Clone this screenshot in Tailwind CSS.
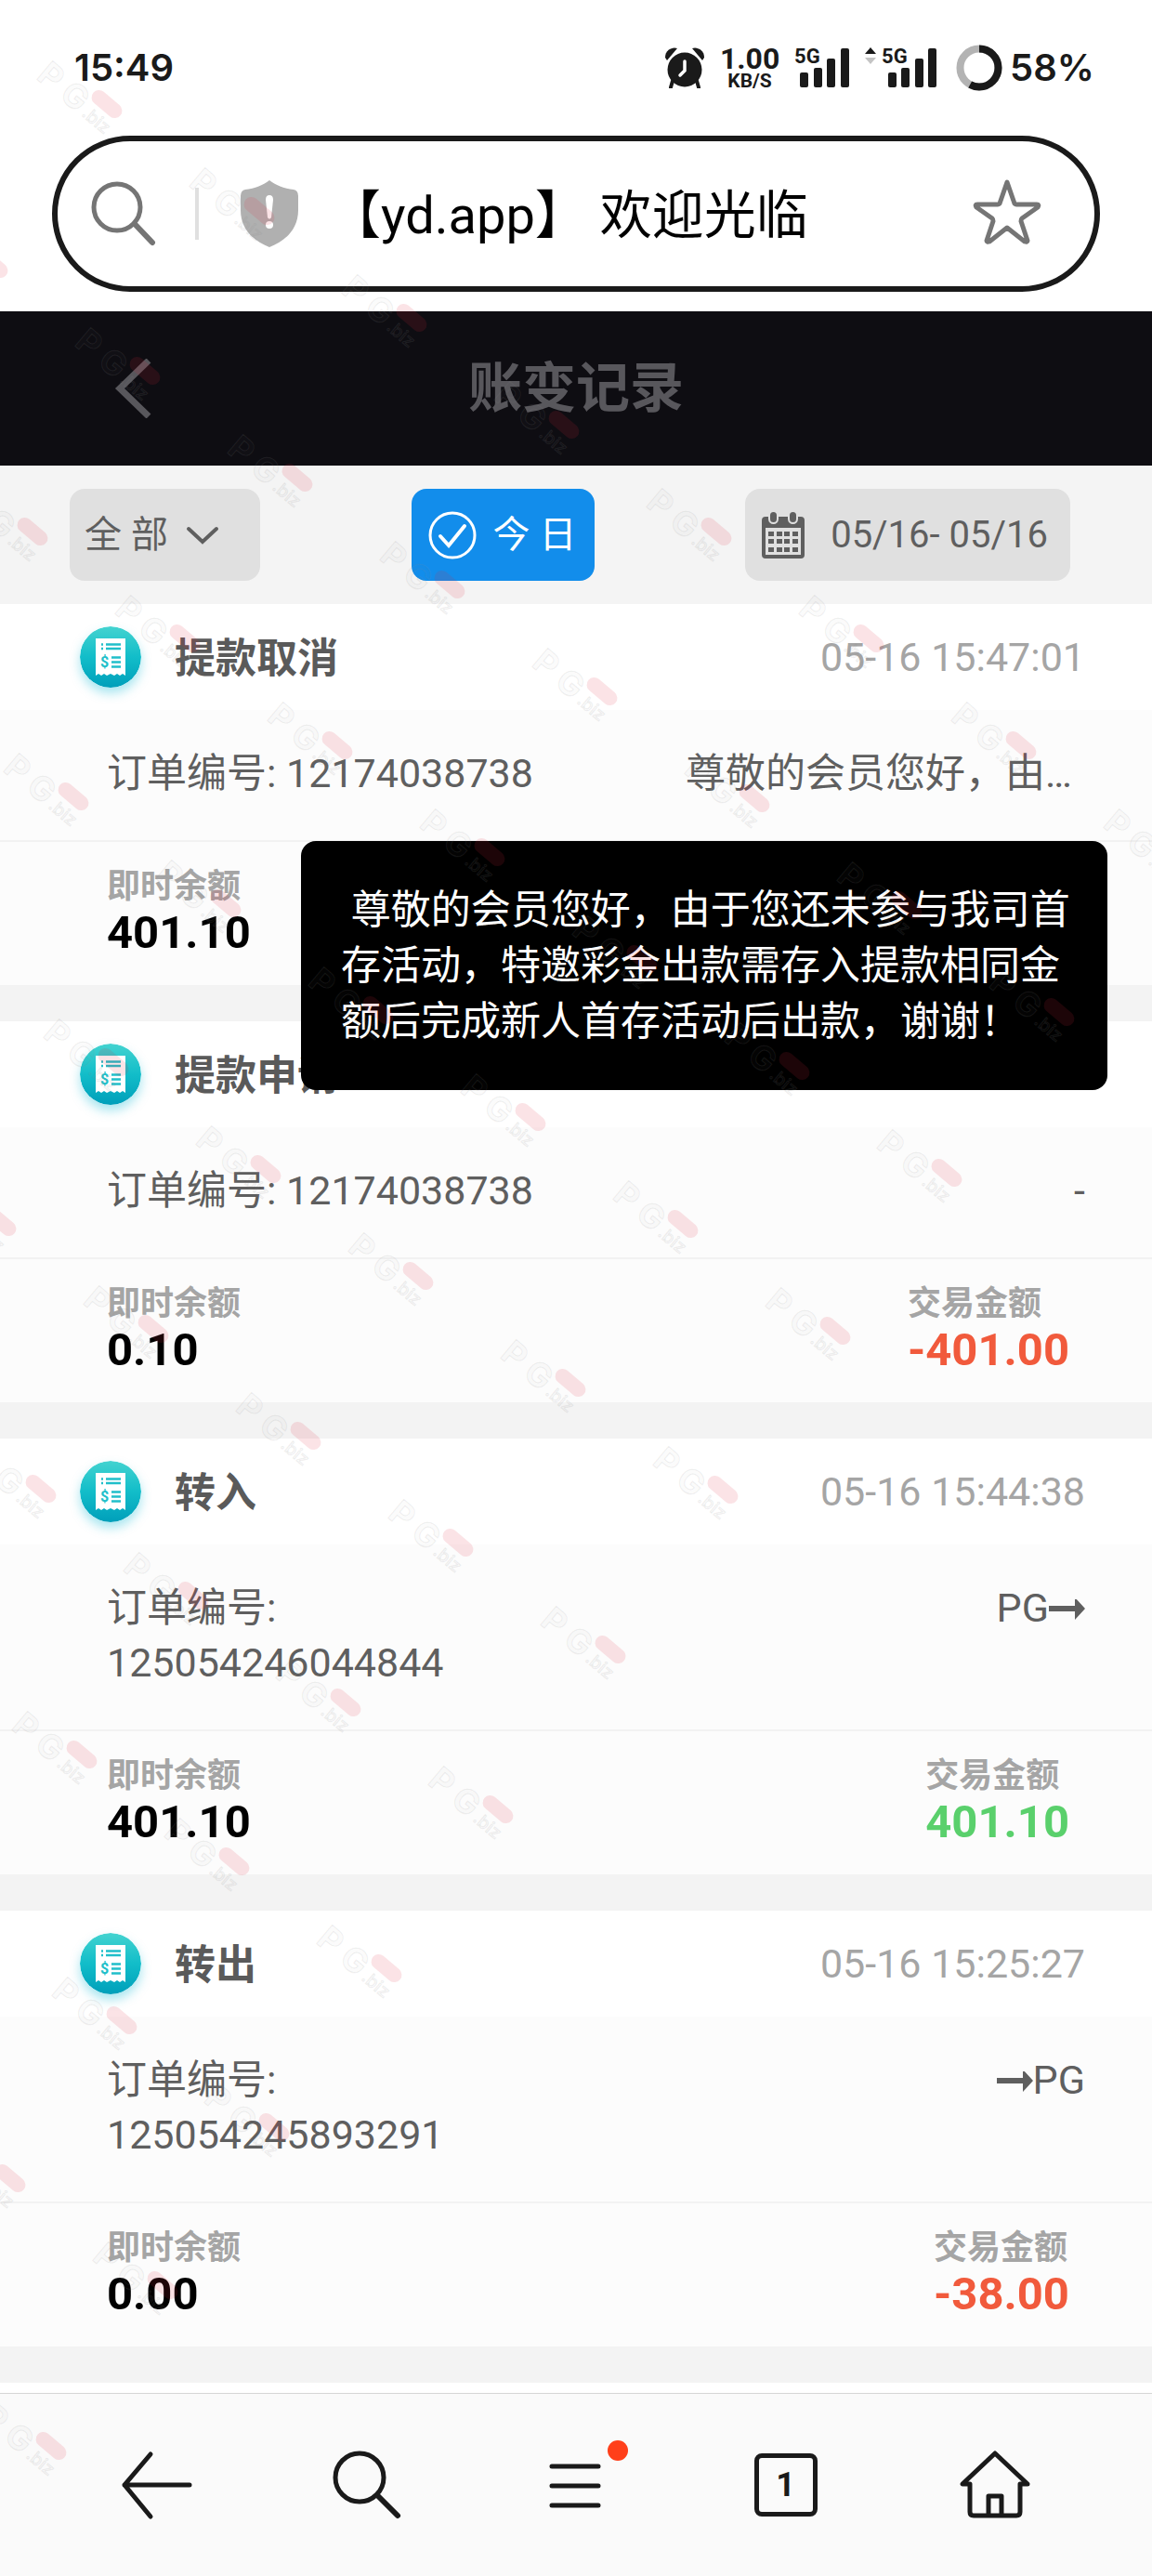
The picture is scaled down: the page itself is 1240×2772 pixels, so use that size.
<!DOCTYPE html>
<html lang="zh-CN">
<head>
  <meta charset="UTF-8" />
  <meta name="viewport" content="width=device-width, initial-scale=1.0" />
  <title>账变记录</title>
  <script src="https://cdn.jsdelivr.net/npm/@tailwindcss/browser@4"></script>
</head>
<body class="bg-white font-['Roboto','Noto_Sans_CJK_SC',sans-serif]">
<div class="relative flex min-h-screen flex-col overflow-hidden">

  <!-- Status bar -->
  <div class="flex h-[146px] items-center justify-between pl-20 pr-[62px] font-['Inter',sans-serif] font-semibold text-[#1a1a1a]">
    <span class="text-[40px]">15:49</span>
    <div class="flex items-center">
      <svg class="h-11 w-11" viewBox="0 0 44 44" fill="#1a1a1a">
        <circle cx="22" cy="24" r="18.500" />
        <path d="M1 11 A10 10 0 0 1 14 1 L3 14 Z" />
        <path d="M43 11 A10 10 0 0 0 30 1 L41 14 Z" />
        <path d="M9 36 L7 43 M35 36 L37 43" stroke="#1a1a1a" stroke-width="4" stroke-linecap="round" />
        <path d="M22 15 V25 L17 30" fill="none" stroke="#fff" stroke-width="3.500" stroke-linecap="round" />
      </svg>
      <div class="ml-4 flex w-16 flex-col items-center font-['Roboto',sans-serif] font-bold">
        <span class="text-[32px] leading-7">1.00</span>
        <span class="text-[21px] leading-5">KB/S</span>
      </div>
      <div class="relative ml-4">
        <svg class="h-11 w-[60px]" viewBox="0 0 60 44" fill="#1a1a1a">
          <rect x="6" y="27" width="9" height="16" rx="2" />
          <rect x="21" y="22" width="9" height="21" rx="2" />
          <rect x="35" y="12" width="9" height="31" rx="2" />
          <rect x="50" y="1" width="9" height="42" rx="2" />
        </svg>
        <span class="absolute -top-1 left-0 font-['Roboto',sans-serif] text-[22px] font-bold leading-7">5G</span>
      </div>
      <div class="relative ml-4">
        <svg class="h-11 w-[78px]" viewBox="0 0 78 44" fill="#1a1a1a">
          <path d="M0 7 L6 0 L12 7 Z" />
          <path d="M0 11 L6 18 L12 11 Z" fill="#c4c4c4" />
          <rect x="25" y="27" width="9" height="16" rx="2" />
          <rect x="39" y="22" width="9" height="21" rx="2" />
          <rect x="54" y="12" width="9" height="31" rx="2" />
          <rect x="68" y="1" width="9" height="42" rx="2" />
        </svg>
        <span class="absolute -top-1 left-[18px] font-['Roboto',sans-serif] text-[22px] font-bold leading-7">5G</span>
      </div>
      <svg class="ml-5 h-[50px] w-[50px]" viewBox="0 0 50 50" fill="none" stroke-width="8">
        <circle cx="25" cy="25" r="20.500" stroke="#b3b3b3" />
        <circle cx="25" cy="25" r="20.500" stroke="#1a1a1a" pathLength="100" stroke-dasharray="58 42" transform="rotate(-90 25 25)" />
      </svg>
      <span class="ml-2 text-[40px]">58%</span>
    </div>
  </div>

  <!-- Address bar -->
  <div class="mx-14 flex h-[168px] items-center rounded-full border-6 border-[#1a1a1a] pl-9 pr-14">
    <svg class="h-[72px] w-[72px]" viewBox="0 0 72 72" fill="none" stroke="#757575" stroke-linecap="round">
      <circle cx="28" cy="29" r="25" stroke-width="5" />
      <path d="M47 47 L66 67" stroke-width="6" />
    </svg>
    <span class="ml-10 h-14 w-1 bg-[#e0e0e0]"></span>
    <svg class="ml-11 h-[72px] w-16" viewBox="0 0 64 72">
      <path d="M32 0 C38 5 48 9 58 10 Q63 11 63 17 V32 C63 52 50 65 32 72 C14 65 1 52 1 32 V17 Q1 11 6 10 C16 9 26 5 32 0 Z" fill="#b0b0b0" />
      <path d="M32 16 Q36 16 36 21 L34 40 Q32 43 30 40 L28 21 Q28 16 32 16 Z" fill="#fff" />
      <circle cx="32" cy="48" r="4" fill="#fff" />
    </svg>
    <input type="text" aria-label="网址" value="【yd.app】 欢迎光临" class="ml-8 min-w-0 flex-1 pt-1 text-[56px] text-black outline-none" />
    <button aria-label="收藏">
      <svg class="h-[76px] w-[76px]" viewBox="0 0 76 76" fill="none" stroke="#757575" stroke-width="5" stroke-linejoin="round">
        <path d="M38 4 L46 27 Q47 28 48 28 H70 Q73 28 71 31 L54 43 Q53 44 53 46 L60 67 Q60 69 57 68 L38 53 L19 68 Q16 69 16 67 L23 46 Q23 44 22 43 L5 31 Q3 28 6 28 H28 Q29 28 30 27 Z" />
      </svg>
    </button>
  </div>

  <!-- Page header -->
  <header class="mt-[21px] flex h-[166px] items-center bg-[#0e0d12] px-[120px] text-[#58575c]">
    <button aria-label="返回" class="w-12">
      <svg class="h-16 w-12" viewBox="0 0 48 64" fill="none" stroke="currentColor" stroke-width="7">
        <path d="M40 2 L9 32 L40 62" />
      </svg>
    </button>
    <h1 class="mr-12 flex-1 text-center text-[58px] font-bold">账变记录</h1>
  </header>

  <!-- Filters -->
  <div class="flex h-[149px] items-center justify-between bg-[#f4f4f4] pl-[75px] pr-[88px] text-[40px] text-[#5f5f5f]">
    <div class="relative">
      <select aria-label="类型" class="h-[99px] w-[205px] appearance-none rounded-2xl bg-[#e0e0e0] pl-4 outline-none">
        <option>全 部</option>
      </select>
      <svg class="pointer-events-none absolute right-11 top-10 h-5 w-9" viewBox="0 0 36 20" fill="none" stroke="currentColor" stroke-width="4" stroke-linecap="round">
        <path d="M3 3 L18 17 L33 3" />
      </svg>
    </div>
    <button class="flex h-[99px] w-[197px] items-center rounded-2xl bg-[#128deb] pl-[18px] text-white">
      <svg class="h-[52px] w-[52px]" viewBox="0 0 52 52" fill="none" stroke="#fff" stroke-width="3" stroke-linecap="round">
        <circle cx="26" cy="26" r="24" />
        <path d="M13 27 L22 37 L39 16" stroke-width="4" />
      </svg>
      <span class="ml-[18px]">今 日</span>
    </button>
    <button class="flex h-[99px] items-center rounded-2xl bg-[#e0e0e0] pl-[18px] pr-6">
      <svg class="h-[50px] w-[46px]" viewBox="0 0 46 50" fill="#5f5f5f">
        <path d="M4 5 H42 Q46 5 46 9 V46 Q46 50 42 50 H4 Q0 50 0 46 V9 Q0 5 4 5 Z M4 17 V46 H42 V17 Z" fill-rule="evenodd" />
        <rect x="8" y="-1" width="9" height="13" rx="4.500" stroke="#e0e0e0" stroke-width="2" />
        <rect x="29" y="-1" width="9" height="13" rx="4.500" stroke="#e0e0e0" stroke-width="2" />
        <path d="M7 21h6v5h-6z M16 21h6v5h-6z M24 21h6v5h-6z M33 21h6v5h-6z M7 29h6v5h-6z M16 29h6v5h-6z M24 29h6v5h-6z M33 29h6v5h-6z M7 38h6v5h-6z M16 38h6v5h-6z M24 38h6v5h-6z M33 38h6v5h-6z" />
      </svg>
      <span class="ml-7">05/16- 05/16</span>
    </button>
  </div>

  <!-- Record list -->
  <main class="flex-1">
    <div id="recordList"></div>
  </main>

  <!-- Browser toolbar -->
  <nav class="mt-[9px] grid h-[197px] grid-cols-5 border-t border-[#d6d6d6] bg-[#fafafa] px-14 text-[#1a1a1a]">
    <button aria-label="后退" class="flex items-center justify-center">
      <svg class="h-20 w-20" viewBox="0 0 80 80" fill="none" stroke="currentColor" stroke-width="5" stroke-linecap="round" stroke-linejoin="round">
        <path d="M33 7 L5 40 L33 74 M5 40 H75" />
      </svg>
    </button>
    <button aria-label="搜索" class="flex items-center justify-center">
      <svg class="h-20 w-20" viewBox="0 0 80 80" fill="none" stroke="currentColor" stroke-linecap="round">
        <circle cx="33" cy="32" r="26" stroke-width="5" />
        <path d="M53 52 L74 73" stroke-width="6" />
      </svg>
    </button>
    <button aria-label="菜单" class="flex items-center justify-center">
      <span class="relative">
        <svg class="h-20 w-20" viewBox="0 0 80 80" fill="none" stroke="currentColor" stroke-width="5" stroke-linecap="round">
          <path d="M14 20 H64 M14 41 H64 M14 62 H64" />
        </svg>
        <span class="absolute -right-4 -top-2 h-[22px] w-[22px] rounded-full bg-[#ff3f1a]"></span>
      </span>
    </button>
    <button aria-label="标签页" class="flex items-center justify-center">
      <span class="flex h-[68px] w-[68px] items-center justify-center rounded-lg border-5 border-[#1a1a1a] text-[36px] font-bold">1</span>
    </button>
    <button aria-label="主页" class="flex items-center justify-center">
      <svg class="h-20 w-20" viewBox="0 0 80 80" fill="none" stroke="currentColor" stroke-width="5" stroke-linecap="round" stroke-linejoin="round">
        <path d="M40 6 L5 39 H13 V69 Q13 73 17 73 H63 Q67 73 67 69 V39 H75 Z" />
        <path d="M33 72 V52 H47 V72" />
      </svg>
    </button>
  </nav>

  <!-- Watermark -->
  <svg class="pointer-events-none absolute left-0 top-0 z-20 h-full w-full" aria-hidden="true">
    <defs>
      <g id="mark">
        <g transform="translate(-2 24) rotate(40)" font-family="Inter, sans-serif" fill="#888" fill-opacity="0.04" stroke="#888" stroke-opacity="0.14">
          <text x="0" y="0" font-size="36" font-weight="700">P</text>
          <text x="32" y="0" font-size="36" font-weight="700">G</text>
          <text x="63" y="-1" font-size="19" font-weight="500">.biz</text>
          <rect x="58" y="-36" width="38" height="16" rx="8" fill="#e02840" fill-opacity="0.13" stroke="none" />
        </g>
      </g>
    </defs>
    <g id="marks"></g>
  </svg>
</div>

<script>
  const records = [
    { type: '提款取消', time: '05-16 15:47:01', order: '12174038738', note: '尊敬的会员您好，由于您还未参与我司首存活动', balance: '401.10', amount: '', tip: '尊敬的会员您好，由于您还未参与我司首存活动，特邀彩金出款需存入提款相同金额后完成新人首存活动后出款，谢谢！' },
    { type: '提款申请', time: '05-16 15:47:01', order: '12174038738', note: '-', balance: '0.10', amount: '-401.00' },
    { type: '转入', time: '05-16 15:44:38', order: '125054246044844', note: 'PG→', balance: '401.10', amount: '401.10' },
    { type: '转出', time: '05-16 15:25:27', order: '125054245893291', note: '→PG', balance: '0.00', amount: '-38.00' }
  ];

  const receiptIcon = `
    <svg class="h-[66px] w-[66px] rounded-full shadow-[0_6px_12px_rgba(0,180,210,0.35)]" viewBox="0 0 66 66">
      <defs><linearGradient id="teal" x1="0" y1="0" x2="0" y2="1"><stop offset="0" stop-color="#43d3d0" /><stop offset="0.5" stop-color="#12bdc9" /><stop offset="1" stop-color="#009fba" /></linearGradient></defs>
      <circle cx="33" cy="33" r="33" fill="url(#teal)" />
      <path d="M17 13 H49 V53 L46 51 L43 53 L40 51 L37 53 L33 51 L29 53 L26 51 L23 53 L20 51 L17 53 Z" fill="#fff" />
      <path d="M23 19.500h2 M28 19.500h16 M23 24h2 M28 24h16 M34 33.500h10 M34 38.500h10 M34 43.500h10" stroke="#20bfca" stroke-width="2.500" />
      <text x="22" y="44" font-size="16" font-weight="700" fill="#20bfca">$</text>
    </svg>`;

  const arrow = '<svg class="inline-block h-6 w-[39px] align-baseline" viewBox="0 0 39 24" fill="currentColor" role="img" aria-label="→"><path d="M0 7 H28 V-2 L39 10 L28 22 V13 H0 Z" /></svg>';

  document.getElementById('recordList').innerHTML = records.map(r => `
    <section class="relative border-b-39 border-[#f3f3f3] bg-[#fcfcfc]">
      <div class="flex h-[114px] items-center bg-white pl-[86px] pr-[72px]">
        ${receiptIcon}
        <h2 class="ml-9 flex-1 pt-1 text-[44px] font-bold text-[#5a5a5a]">${r.type}</h2>
        <time class="text-[43px] text-[#a5a5a5]">${r.time}</time>
      </div>
      <div class="flex justify-between border-b-2 border-[#f2f2f2] pb-[42px] pl-[115px] pr-[72px] pt-[39px] text-[43px] leading-[59px] text-[#5f5f5f]">
        <p class="w-[500px]">订单编号: ${r.order}</p>
        <p class="w-[430px] truncate ${r.tip ? 'text-left' : 'text-right'}">${r.note.replace('→', arrow)}</p>
      </div>
      <div class="flex h-[154px] justify-between pl-[115px] pr-[89px] pt-6 font-bold leading-[49px]">
        <div>
          <p class="text-[36px] text-[#a5a5a5]">即时余额</p>
          <p class="text-[49px] text-black">${r.balance}</p>
        </div>
        ${r.amount ? `<div>
          <p class="text-[36px] text-[#a5a5a5]">交易金额</p>
          <p class="text-[49px] ${r.amount.startsWith('-') ? 'text-[#f15a3c]' : 'text-[#5ad06c]'}">${r.amount}</p>
        </div>` : ''}
      </div>
      ${r.tip ? `<div role="tooltip" class="absolute right-12 top-[255px] z-10 w-[70%] rounded-2xl bg-black py-11 pl-[43px] pr-9 text-[43px] leading-[60px] text-white">&nbsp;${r.tip}</div>` : ''}
    </section>
  `).join('');

  // watermark rows: start point and number of marks along the diagonal
  const markRows = [
    [-83, 232, 8], [40, 60, 8], [-40, 520, 7], [-160, 690, 7], [-117, 976, 6],
    [-74, 1263, 5], [-31, 1550, 4], [13, 1836, 3], [56, 2122, 2], [-64, 2292, 2], [-20, 2580, 1]
  ];
  document.getElementById('marks').innerHTML = markRows.map(([x, y, n]) =>
    Array.from({ length: n }, (_, i) => `<use href="#mark" x="${x + i * 164}" y="${y + i * 115}" />`).join('')
  ).join('');
</script>
</body>
</html>
